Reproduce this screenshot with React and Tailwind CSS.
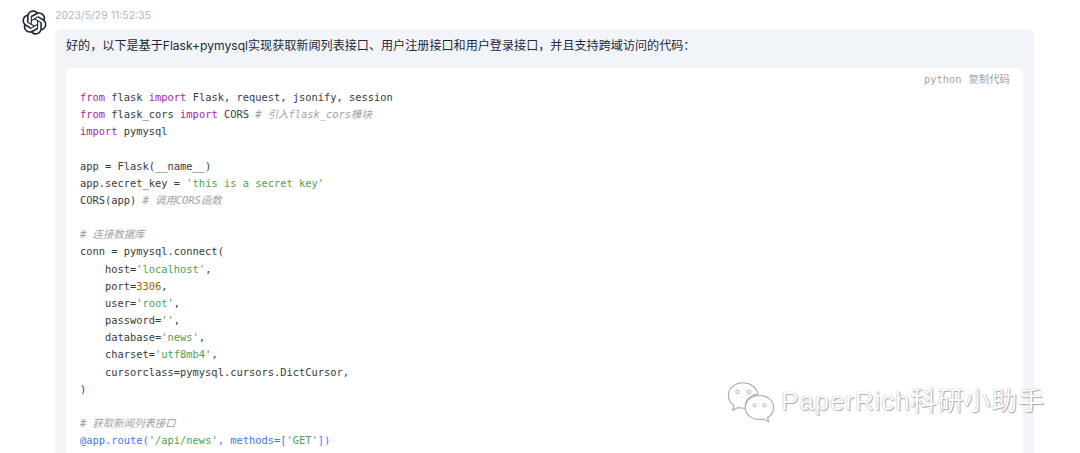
const K = ({ children }) => <span className="text-[#a626a4]">{children}</span>;
const S = ({ children }) => <span className="text-[#50a14f]">{children}</span>;
const N = ({ children }) => <span className="text-[#986801]">{children}</span>;
const C = ({ children }) => <span className="italic text-[#a0a1a7]">{children}</span>;
const M = ({ children }) => <span className="text-[#4078f2]">{children}</span>;

const OPENAI =
  "M37.5324 16.8707C37.9808 15.5241 38.1363 14.0974 37.9886 12.6859C37.8409 11.2744 37.3934 9.91076 36.676 8.68622C35.6126 6.83404 33.9882 5.3676 32.0373 4.4985C30.0864 3.62941 27.9098 3.40259 25.8215 3.85078C24.8796 2.7893 23.7219 1.94125 22.4257 1.36341C21.1295 0.785575 19.7249 0.491269 18.3058 0.500197C16.1708 0.495044 14.0893 1.16803 12.3614 2.42214C10.6335 3.67624 9.34853 5.44666 8.6917 7.47815C7.30085 7.76286 5.98686 8.3414 4.8377 9.17505C3.68854 10.0087 2.73073 11.0782 2.02839 12.312C0.956464 14.1591 0.498905 16.2988 0.721698 18.4228C0.944492 20.5467 1.83612 22.5449 3.268 24.1293C2.81966 25.4759 2.66413 26.9026 2.81182 28.3141C2.95951 29.7256 3.40701 31.0892 4.12437 32.3138C5.18791 34.1659 6.8123 35.6322 8.76321 36.5013C10.7141 37.3704 12.8907 37.5973 14.9789 37.1492C15.9208 38.2107 17.0786 39.0587 18.3747 39.6366C19.6709 40.2144 21.0755 40.5087 22.4946 40.4998C24.6307 40.5054 26.7133 39.8321 28.4418 38.5772C30.1704 37.3223 31.4556 35.5506 32.1119 33.5179C33.5027 33.2332 34.8167 32.6547 35.9659 31.821C37.115 30.9874 38.0728 29.9178 38.7752 28.684C39.8458 26.8371 40.3023 24.6979 40.0789 22.5748C39.8556 20.4517 38.9639 18.4544 37.5324 16.8707ZM22.4978 37.8849C20.7443 37.8874 19.0459 37.2733 17.6994 36.1501C17.7601 36.117 17.8666 36.0586 17.936 36.0161L25.9004 31.4156C26.1003 31.3019 26.2663 31.137 26.3813 30.9378C26.4964 30.7386 26.5563 30.5124 26.5549 30.2825V19.0542L29.9213 20.998C29.9389 21.0068 29.9541 21.0198 29.9656 21.0359C29.977 21.052 29.9842 21.0707 29.9867 21.0902V30.3889C29.9842 32.375 29.1946 34.2791 27.7909 35.6841C26.3872 37.0892 24.4838 37.8806 22.4978 37.8849ZM6.39227 31.0064C5.51397 29.4888 5.19742 27.7107 5.49804 25.9832C5.55718 26.0187 5.66048 26.0818 5.73461 26.1244L13.699 30.7248C13.8975 30.8408 14.1233 30.902 14.3532 30.902C14.583 30.902 14.8088 30.8408 15.0073 30.7248L24.731 25.1103V28.9979C24.7321 29.0177 24.7283 29.0376 24.7199 29.0556C24.7115 29.0736 24.6988 29.0893 24.6829 29.1012L16.6317 33.7497C14.9096 34.7416 12.8643 35.0097 10.9447 34.4954C9.02506 33.9811 7.38785 32.7263 6.39227 31.0064ZM4.29707 13.6194C5.17156 12.0998 6.55279 10.9364 8.19885 10.3327C8.19885 10.4013 8.19491 10.5228 8.19491 10.6071V19.808C8.19351 20.0378 8.25334 20.2638 8.36823 20.4629C8.48312 20.6619 8.64893 20.8267 8.84863 20.9404L18.5723 26.5542L15.206 28.4979C15.1894 28.5089 15.1703 28.5155 15.1505 28.5173C15.1307 28.5191 15.1107 28.516 15.0924 28.5082L7.04046 23.8557C5.32135 22.8601 4.06716 21.2235 3.55289 19.3046C3.03862 17.3858 3.30624 15.3413 4.29707 13.6194ZM31.955 20.0556L22.2312 14.4411L25.5976 12.4981C25.6142 12.4872 25.6333 12.4805 25.6531 12.4787C25.6729 12.4769 25.6928 12.4801 25.7111 12.4879L33.7631 17.1364C34.9967 17.849 36.0017 18.8982 36.6606 20.1613C37.3194 21.4244 37.6047 22.849 37.4832 24.2684C37.3617 25.6878 36.8382 27.0432 35.9743 28.1759C35.1103 29.3086 33.9415 30.1717 32.6047 30.6641C32.6047 30.5947 32.6047 30.4733 32.6047 30.3889V21.188C32.6066 20.9586 32.5474 20.7328 32.4332 20.5338C32.319 20.3348 32.154 20.1698 31.955 20.0556ZM35.3055 15.0128C35.2464 14.9765 35.1431 14.9142 35.069 14.8717L27.1045 10.2712C26.906 10.1554 26.6803 10.0943 26.4504 10.0943C26.2206 10.0943 25.9948 10.1554 25.7963 10.2712L16.0726 15.8858V11.9982C16.0715 11.9783 16.0753 11.9585 16.0837 11.9405C16.0921 11.9225 16.1048 11.9068 16.1207 11.8949L24.1719 7.25025C25.4053 6.53903 26.8158 6.19376 28.2383 6.25482C29.6608 6.31589 31.0364 6.78077 32.2044 7.59508C33.3723 8.40939 34.2842 9.53945 34.8334 10.8531C35.3826 12.1667 35.5464 13.6095 35.3055 15.0128ZM14.2424 21.9419L10.8752 19.9981C10.8576 19.9893 10.8423 19.9763 10.8309 19.9602C10.8195 19.9441 10.8122 19.9254 10.8098 19.9058V10.6071C10.8107 9.18295 11.2173 7.78848 11.9819 6.58696C12.7466 5.38544 13.8377 4.42659 15.1275 3.82264C16.4173 3.21869 17.8524 2.99464 19.2649 3.1767C20.6775 3.35876 22.0089 3.93941 23.1034 4.85067C23.0427 4.88379 22.937 4.94215 22.8668 4.98473L14.9024 9.58517C14.7025 9.69878 14.5366 9.86356 14.4215 10.0626C14.3065 10.2616 14.2466 10.4877 14.2479 10.7175L14.2424 21.9419ZM16.071 17.9991L20.4018 15.4978L24.7325 17.9975V22.9985L20.4018 25.4983L16.071 22.9985V17.9991Z";

function WeChatMark() {
  const back = "M26 5C14 5 5 13 5 23c0 6 3 11 8 14l-2 7 8-4c2 .6 5 1 7 1 1 0 2 0 3-.2C28 29 37 22 47 21 45 12 36 5 26 5Z";
  const front = "M49 23c-11 0-20 7-20 17s9 17 20 17c2 0 4-.3 6-.8l7 4-1.6-6C66 51 69 46 69 40c0-10-9-17-20-17Z";
  return (
    <svg width="48" height="41" viewBox="4 4 66 58" className="overflow-visible shrink-0">
      <g fill="#ffffff" stroke="#a8a8a8" strokeWidth="1.5" strokeLinejoin="round">
        <path d={back} />
        <path d={front} />
      </g>
      <g fill="#ffffff" stroke="#a8a8a8" strokeWidth="1.2">
        <circle cx="18" cy="18" r="2.6" />
        <circle cx="34" cy="18" r="2.6" />
        <circle cx="42" cy="37" r="2.3" />
        <circle cx="56" cy="37" r="2.3" />
      </g>
    </svg>
  );
}

const MONO = "font-['DejaVu_Sans_Mono','Noto_Sans_CJK_SC',monospace]";

export default function App() {
  return (
    <div className="relative h-[453px] w-[1080px] overflow-hidden bg-white font-['Inter','Noto_Sans_CJK_SC',sans-serif]">
      <div className="flex gap-[8px] pl-[22px] pt-[9px]">
        <svg width="25" height="25" viewBox="0 0 41 41" className="mt-[1px] shrink-0">
          <path d={OPENAI} fill="#1f2937" />
        </svg>
        <div className="w-[979px]">
          <div className="h-[20px] text-[10.5px] leading-[13px] text-[#b0b6c0]">2023/5/29 11:52:35</div>
          <div className="rounded-[6px] bg-[#f1f4f8] px-[11px] pt-[8px]">
            <p className="text-[12.1px] leading-[17px] text-[#1f2937]">
              好的，以下是基于Flask+pymysql实现获取新闻列表接口、用户注册接口和用户登录接口，并且支持跨域访问的代码：
            </p>
            <div className="mt-[14px] rounded-[5px] bg-white pb-[40px] pl-[14px] pr-[13px] pt-[5px]">
              <div className={`flex justify-end gap-[7px] text-[10.4px] leading-[13px] text-[#a3a3a3] ${MONO}`}>
                <span>python</span>
                <span>复制代码</span>
              </div>
              <pre className={`mt-[3px] text-[10.4px] leading-[17.15px] text-[#383a42] ${MONO}`}>
                <K>from</K>{" flask "}<K>import</K>{" Flask, request, jsonify, session\n"}
                <K>from</K>{" flask_cors "}<K>import</K>{" CORS "}<C># 引入flask_cors模块</C>{"\n"}
                <K>import</K>{" pymysql\n\n"}
                {"app = Flask(__name__)\n"}
                {"app.secret_key = "}<S>'this is a secret key'</S>{"\n"}
                {"CORS(app) "}<C># 调用CORS函数</C>{"\n\n"}
                <C># 连接数据库</C>{"\n"}
                {"conn = pymysql.connect(\n"}
                {"    host="}<S>'localhost'</S>{",\n"}
                {"    port="}<N>3306</N>{",\n"}
                {"    user="}<S>'root'</S>{",\n"}
                {"    password="}<S>''</S>{",\n"}
                {"    database="}<S>'news'</S>{",\n"}
                {"    charset="}<S>'utf8mb4'</S>{",\n"}
                {"    cursorclass=pymysql.cursors.DictCursor,\n"}
                {")\n\n"}
                <C># 获取新闻列表接口</C>{"\n"}
                <M>@app.route(<S>'/api/news'</S>, methods=[<S>'GET'</S>])</M>{"\n"}
              </pre>
            </div>
          </div>
        </div>
      </div>
      <div className="absolute left-[727px] top-[382px] flex items-center gap-[6px]">
        <WeChatMark />
        <span className="-mt-[4px] whitespace-nowrap text-[26px] leading-[30px] tracking-[0.9px] text-white [text-shadow:0_0_1px_#8a8a8a,1px_1px_1px_#b0b0b0] font-['Liberation_Sans','Noto_Sans_CJK_SC',sans-serif]">
          PaperRich科研小助手
        </span>
      </div>
    </div>
  );
}
